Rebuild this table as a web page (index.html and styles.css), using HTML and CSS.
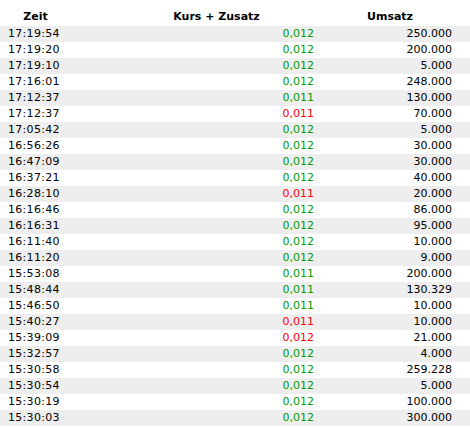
FILE: index.html
```html
<!DOCTYPE html>
<html lang="de">
<head>
<meta charset="utf-8">
<link rel="stylesheet" href="styles.css">
</head>
<body>
<table class="trades">
<colgroup><col class="c-time"><col class="c-kurs"><col class="c-vol"></colgroup>
<thead>
<tr><th class="h-time">Zeit</th><th class="h-kurs">Kurs + Zusatz</th><th class="h-vol">Umsatz</th></tr>
</thead>
<tbody>
<tr><td class="time">17:19:54</td><td class="kurs up">0,012</td><td class="vol">250.000</td></tr>
<tr><td class="time">17:19:20</td><td class="kurs up">0,012</td><td class="vol">200.000</td></tr>
<tr><td class="time">17:19:10</td><td class="kurs up">0,012</td><td class="vol">5.000</td></tr>
<tr><td class="time">17:16:01</td><td class="kurs up">0,012</td><td class="vol">248.000</td></tr>
<tr><td class="time">17:12:37</td><td class="kurs up">0,011</td><td class="vol">130.000</td></tr>
<tr><td class="time">17:12:37</td><td class="kurs down">0,011</td><td class="vol">70.000</td></tr>
<tr><td class="time">17:05:42</td><td class="kurs up">0,012</td><td class="vol">5.000</td></tr>
<tr><td class="time">16:56:26</td><td class="kurs up">0,012</td><td class="vol">30.000</td></tr>
<tr><td class="time">16:47:09</td><td class="kurs up">0,012</td><td class="vol">30.000</td></tr>
<tr><td class="time">16:37:21</td><td class="kurs up">0,012</td><td class="vol">40.000</td></tr>
<tr><td class="time">16:28:10</td><td class="kurs down">0,011</td><td class="vol">20.000</td></tr>
<tr><td class="time">16:16:46</td><td class="kurs up">0,012</td><td class="vol">86.000</td></tr>
<tr><td class="time">16:16:31</td><td class="kurs up">0,012</td><td class="vol">95.000</td></tr>
<tr><td class="time">16:11:40</td><td class="kurs up">0,012</td><td class="vol">10.000</td></tr>
<tr><td class="time">16:11:20</td><td class="kurs up">0,012</td><td class="vol">9.000</td></tr>
<tr><td class="time">15:53:08</td><td class="kurs up">0,011</td><td class="vol">200.000</td></tr>
<tr><td class="time">15:48:44</td><td class="kurs up">0,011</td><td class="vol">130.329</td></tr>
<tr><td class="time">15:46:50</td><td class="kurs up">0,011</td><td class="vol">10.000</td></tr>
<tr><td class="time">15:40:27</td><td class="kurs down">0,011</td><td class="vol">10.000</td></tr>
<tr><td class="time">15:39:09</td><td class="kurs down">0,012</td><td class="vol">21.000</td></tr>
<tr><td class="time">15:32:57</td><td class="kurs up">0,012</td><td class="vol">4.000</td></tr>
<tr><td class="time">15:30:58</td><td class="kurs up">0,012</td><td class="vol">259.228</td></tr>
<tr><td class="time">15:30:54</td><td class="kurs up">0,012</td><td class="vol">5.000</td></tr>
<tr><td class="time">15:30:19</td><td class="kurs up">0,012</td><td class="vol">100.000</td></tr>
<tr><td class="time">15:30:03</td><td class="kurs up">0,012</td><td class="vol">300.000</td></tr>
</tbody>
</table>
</body>
</html>
```
FILE: styles.css
```css
html, body {
  margin: 0;
  padding: 0;
  background: #fff;
}
body {
  font-family: "DejaVu Sans", Verdana, sans-serif;
  font-size: 11px;
  color: #000;
}
.trades {
  width: 470px;
  border-collapse: collapse;
  table-layout: fixed;
}
.c-time { width: 71px; }
.c-kurs { width: 245px; }
.c-vol { width: 154px; }
.trades th {
  font-weight: bold;
  line-height: 16px;
  height: 16px;
  padding: 9px 0 1px 0;
  text-align: center;
}
.h-kurs { padding-left: 46px !important; }
.h-vol { padding-right: 6px !important; }
.trades td {
  line-height: 16px;
  height: 16px;
  padding: 0;
  white-space: nowrap;
}
.trades tbody tr:nth-child(odd) { background: #eeeeee; }
.time { padding-left: 8px !important; text-align: left; letter-spacing: 0.3px; }
.kurs { text-align: right; padding-right: 2px !important; }
.vol { text-align: right; padding-right: 18px !important; }
.up { color: #009900; }
.down { color: #ff0000; }
```
